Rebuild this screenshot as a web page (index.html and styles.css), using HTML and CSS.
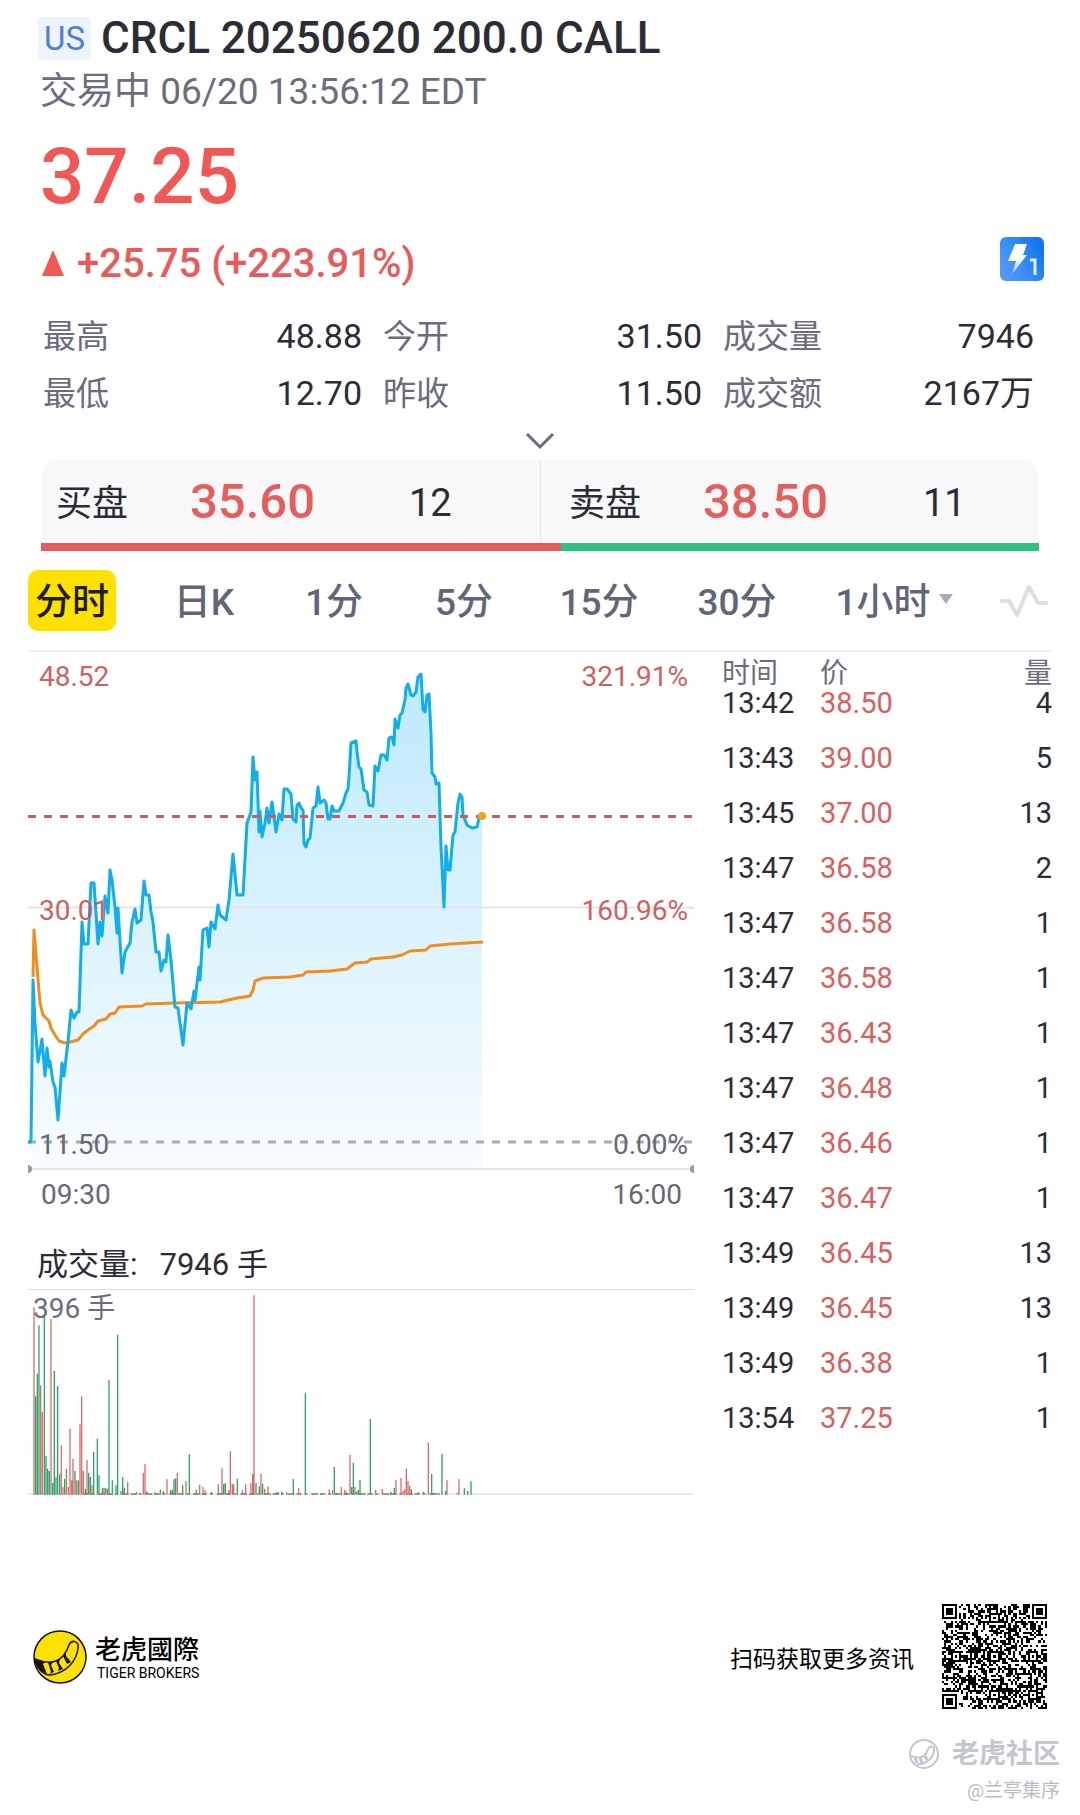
FILE: index.html
```html
<!DOCTYPE html>
<html lang="zh-CN">
<head>
<meta charset="utf-8">
<meta name="viewport" content="width=device-width, initial-scale=1">
<title>CRCL 20250620 200.0 CALL</title>
<link rel="stylesheet" href="styles.css">
</head>
<body>
<main class="page">
  <header class="quote">
    <h1 class="title"><span class="market">US</span>CRCL 20250620 200.0 CALL</h1>
    <p class="status">交易中 06/20 13:56:12 EDT</p>
    <p class="price">37.25</p>
    <div class="change">
      <svg class="up" viewBox="0 0 22 26" aria-hidden="true"><path d="M11 0L22 26H0Z" fill="#f15755"/></svg>
      <span>+25.75 (+223.91%)</span>
      <svg class="level" viewBox="0 0 44 44" role="img" aria-label="Level 1">
        <defs>
          <linearGradient id="lv" x1="0" y1="1" x2="1" y2="0.4"><stop offset="0" stop-color="#5f97f6"/><stop offset="0.5" stop-color="#3a8ff8"/><stop offset="1" stop-color="#1476ee"/></linearGradient>
          <linearGradient id="bolt" x1="0" y1="0" x2="0" y2="1"><stop offset="0.4" stop-color="#fff"/><stop offset="1" stop-color="#a9d2ff"/></linearGradient>
        </defs>
        <rect width="44" height="44" rx="6" fill="url(#lv)"/>
        <path d="M15 7H27L23 18H27L12 37L16 24H8Z" fill="url(#bolt)"/>
        <path d="M30 23H35V38" fill="none" stroke="#e4f1ff" stroke-width="3"/>
      </svg>
    </div>
  </header>

  <dl class="stats">
    <div><dt>最高</dt><dd>48.88</dd></div>
    <div><dt>今开</dt><dd>31.50</dd></div>
    <div><dt>成交量</dt><dd>7946</dd></div>
    <div><dt>最低</dt><dd>12.70</dd></div>
    <div><dt>昨收</dt><dd>11.50</dd></div>
    <div><dt>成交额</dt><dd>2167万</dd></div>
  </dl>
  <button class="expand" type="button" aria-label="展开">
    <svg viewBox="0 0 30 18"><path d="M2 2L15 15L28 2" fill="none" stroke="#6b6d7d" stroke-width="3"/></svg>
  </button>

  <section class="book">
    <div class="side bid"><span class="label">买盘</span><strong>35.60</strong><span class="lots">12</span></div>
    <div class="side ask"><span class="label">卖盘</span><strong>38.50</strong><span class="lots">11</span></div>
  </section>
  <div class="ratio"><i class="buy" style="width:52.1%"></i><i class="sell"></i></div>

  <nav class="tabs">
    <button type="button" class="active">分时</button>
    <button type="button">日K</button>
    <button type="button">1分</button>
    <button type="button">5分</button>
    <button type="button">15分</button>
    <button type="button">30分</button>
    <button type="button" class="more">1小时<svg viewBox="0 0 14 10" aria-hidden="true"><path d="M0 0H14L7 10Z" fill="#a8abba"/></svg></button>
    <button type="button" class="wave" aria-label="指标"><svg viewBox="0 0 48 34"><path d="M2 17H9L17 31L29 3L38 19H46" fill="none" stroke="#dddde2" stroke-width="4" stroke-linecap="round" stroke-linejoin="round"/></svg></button>
  </nav>

  <div class="board">
    <section class="charts">
      <svg class="chart" viewBox="28 652 666 562" role="img" aria-label="分时走势">
        <defs><linearGradient id="area" gradientUnits="userSpaceOnUse" x1="0" y1="674" x2="0" y2="1169"><stop offset="0" stop-color="#bde9fe"/><stop offset="0.5" stop-color="#dbf3fd"/><stop offset="1" stop-color="#f8fcff"/></linearGradient></defs>
        <path fill="url(#area)" d="M31 1169V1142L33 980 35 1023 38 1062 42 1039 45 1076 47 1048 49 1067 50 1061 53 1082 55 1087 58 1120 62 1063 64 1076 67 1050 68 1042 71 1010 74 1018 77 1012 79 1012 80 983 82 922 84 944 88 944 91 883 94 883 98 944 100 922 102 936 105 896 108 913 110 870 112 880 115 907 117 933 118 908 122 973 125 952 130 943 132 922 135 909 137 923 141 920 144 881 146 895 149 895 151 912 153 922 156 952 159 952 161 971 164 960 166 962 168 935 171 960 175 1007 178 1008 183 1045 187 1003 191 1009 194 991 195 1000 199 967 200 980 203 930 207 928 209 947 211 922 215 929 218 905 220 915 226 920 229 900 233 854 237 895 243 895 247 823 251 812 253 757 255 780 257 772 259 832 260 811 262 837 265 823 267 808 269 823 272 802 276 832 279 814 282 820 284 789 287 789 291 794 293 819 296 822 297 805 299 803 301 808 303 810 304 843 306 847 308 840 310 838 313 808 316 806 318 787 320 803 324 800 326 803 328 819 330 819 332 806 334 811 339 811 343 803 346 793 348 789 349 777 351 743 356 741 357 752 359 767 361 769 364 790 367 792 369 805 373 806 375 766 378 771 381 755 384 755 387 760 389 738 392 737 394 745 395 719 398 728 400 715 402 713 405 700 406 688 408 684 411 695 413 696 416 692 418 677 421 674 423 710 425 712 427 695 429 694 431 733 432 773 435 777 436 784 439 783 441 847 444 907 446 846 448 870 450 870 453 835 455 832 458 803 460 794 462 797 463 815 467 825 472 828 477 827 479 818 482 816V1169Z"/>
        <path d="M28 907.500H694M28 1169H694" stroke="#e2e6ea" stroke-width="2" fill="none"/>
        <path d="M28 1142H694" stroke="#a9acb4" stroke-width="3" stroke-dasharray="8 8"/>
        <path fill="none" stroke="#f28c1c" stroke-width="3" stroke-linejoin="round" d="M33 977L34 930 37 967 40 1003 43 1015 49 1021 51 1028 55 1035 59 1041 65 1043 70 1042 78 1040 83 1034 88 1030 94 1026 98 1021 106 1019 110 1014 115 1013 119 1007 142 1006 146 1004 175 1003 220 1002 237 998 250 996 253 990 255 981 263 978 290 977 303 975 306 972 330 971 347 969 355 963 367 962 371 959 393 957 402 955 410 951 426 950 430 946 450 944 483 942"/>
        <path fill="none" stroke="#11aeec" stroke-width="3" stroke-linejoin="round" d="M28 1142H31L33 980 35 1023 38 1062 42 1039 45 1076 47 1048 49 1067 50 1061 53 1082 55 1087 58 1120 62 1063 64 1076 67 1050 68 1042 71 1010 74 1018 77 1012 79 1012 80 983 82 922 84 944 88 944 91 883 94 883 98 944 100 922 102 936 105 896 108 913 110 870 112 880 115 907 117 933 118 908 122 973 125 952 130 943 132 922 135 909 137 923 141 920 144 881 146 895 149 895 151 912 153 922 156 952 159 952 161 971 164 960 166 962 168 935 171 960 175 1007 178 1008 183 1045 187 1003 191 1009 194 991 195 1000 199 967 200 980 203 930 207 928 209 947 211 922 215 929 218 905 220 915 226 920 229 900 233 854 237 895 243 895 247 823 251 812 253 757 255 780 257 772 259 832 260 811 262 837 265 823 267 808 269 823 272 802 276 832 279 814 282 820 284 789 287 789 291 794 293 819 296 822 297 805 299 803 301 808 303 810 304 843 306 847 308 840 310 838 313 808 316 806 318 787 320 803 324 800 326 803 328 819 330 819 332 806 334 811 339 811 343 803 346 793 348 789 349 777 351 743 356 741 357 752 359 767 361 769 364 790 367 792 369 805 373 806 375 766 378 771 381 755 384 755 387 760 389 738 392 737 394 745 395 719 398 728 400 715 402 713 405 700 406 688 408 684 411 695 413 696 416 692 418 677 421 674 423 710 425 712 427 695 429 694 431 733 432 773 435 777 436 784 439 783 441 847 444 907 446 846 448 870 450 870 453 835 455 832 458 803 460 794 462 797 463 815 467 825 472 828 477 827 479 818 482 816"/>
        <path d="M28 816.500H694" stroke="#d05a5e" stroke-width="3" stroke-dasharray="8 8"/>
        <circle cx="482" cy="816" r="4" fill="#eea41c"/>
        <path d="M28 1165a4 4 0 0 1 0 8ZM694 1165a4 4 0 0 0 0 8Z" fill="#999ba3"/>
        <g class="up-text"><text x="39" y="686">48.52</text><text x="39" y="920">30.01</text><text class="end" x="688" y="686">321.91%</text><text class="end" x="688" y="920">160.96%</text></g>
        <g class="flat-text"><text x="39" y="1154">11.50</text><text class="end" x="688" y="1154">0.00%</text><text x="41" y="1204">09:30</text><text class="end" x="682" y="1204">16:00</text></g>
      </svg>
      <h2 class="volume-title">成交量:<span>7946 手</span></h2>
      <div class="volume">
        <span class="peak">396 手</span>
        <svg viewBox="24 149 1998 615" role="img" aria-label="成交量">
          <path d="M24 761H2022" stroke="#e4e4e6" stroke-width="5"/>
          <g fill="none" stroke-width="4">
            <path stroke="#de6c6c" d="M42 763V200M62 763V435M67 763V515M93 763V236M124 763V615M129 763V740M139 763V685M145 763V740M150 763V565M155 763V720M159 763V655M170 763V720M180 763V552M185 763V468M190 763V692M201 763V658M216 763V735M247 763V742M257 763V742M323 763V725M350 763V755M370 763V697M375 763V672M441 763V717M472 763V698M498 763V722M539 763V733M549 763V740M555 763V750M595 763V732M606 763V684M626 763V750M631 763V633M637 763V732M641 763V732M667 763V750M677 763V732M693 763V728M698 763V700M702 763V165M723 763V700M734 763V745M744 763V738"/>
            <path stroke="#2fa56d" d="M47 763V468M52 763V400M57 763V255M73 763V225M78 763V646M83 763V685M88 763V692M98 763V728M103 763V391M108 763V710M113 763V437M119 763V702M134 763V715M165 763V692M175 763V720M196 763V745M206 763V697M211 763V710M221 763V635M232 763V595M237 763V705M252 763V742M262 763V745M267 763V420M277 763V720M288 763V735M293 763V283M303 763V752M308 763V710M313 763V742M380 763V753M405 763V756M421 763V748M430 763V752M452 763V750M457 763V748M462 763V717M467 763V714M488 763V735M508 763V641M529 763V748M575 763V754M611 763V732M616 763V728M652 763V715M708 763V728M718 763V738M728 763V730M770 763V755"/>
            <path stroke="#8f7a66" stroke-dasharray="16 9 8 12 20 6" d="M190 761H1260"/>
            <g transform="translate(750 122)">
              <path stroke="#de6c6c" d="M86 641V622M128 641V636M178 641V625M188 641V627M214 641V618M224 641V627M240 641V522M255 641V618M317 641V627M337 641V624M378 641V596M393 641V591M399 641V630M404 641V625M409 641V563M414 641V600M419 641V614M445 641V633M475 641V485M531 641V598M562 641V635M567 641V595"/>
              <path stroke="#2fa56d" d="M25 641V634M35 641V632M50 641V634M70 641V594M106 641V337M154 641V637M193 641V557M199 641V635M229 641V632M245 641V618M250 641V545M260 641V632M265 641V627M270 641V597M301 641V414M362 641V632M373 641V620M424 641V625M460 641V633M485 641V579M490 641V636M501 641V636M516 641V518M527 641V630M583 641V622M593 641V630M603 641V601"/>
            </g>
          </g>
        </svg>
      </div>
    </section>

    <table class="ticks">
      <thead><tr><th scope="col">时间</th><th scope="col">价</th><th scope="col">量</th></tr></thead>
      <tbody>
        <tr><td>13:42</td><td>38.50</td><td>4</td></tr>
        <tr><td>13:43</td><td>39.00</td><td>5</td></tr>
        <tr><td>13:45</td><td>37.00</td><td>13</td></tr>
        <tr><td>13:47</td><td>36.58</td><td>2</td></tr>
        <tr><td>13:47</td><td>36.58</td><td>1</td></tr>
        <tr><td>13:47</td><td>36.58</td><td>1</td></tr>
        <tr><td>13:47</td><td>36.43</td><td>1</td></tr>
        <tr><td>13:47</td><td>36.48</td><td>1</td></tr>
        <tr><td>13:47</td><td>36.46</td><td>1</td></tr>
        <tr><td>13:47</td><td>36.47</td><td>1</td></tr>
        <tr><td>13:49</td><td>36.45</td><td>13</td></tr>
        <tr><td>13:49</td><td>36.45</td><td>13</td></tr>
        <tr><td>13:49</td><td>36.38</td><td>1</td></tr>
        <tr><td>13:54</td><td>37.25</td><td>1</td></tr>
      </tbody>
    </table>
  </div>

  <footer class="footer">
    <svg class="logo" viewBox="0 0 54 54" aria-hidden="true">
      <circle cx="27" cy="27" r="26" fill="#ffe100" stroke="#15130a" stroke-width="1.500"/>
      <path d="M2 29C9 32 17 33 23 31C31 28 34 21 36 15C39 9 46 11 45 18C44 30 34 43 17 45C13 45 10 43 8 41C4 37 2 33 2 29Z" fill="#ffe100" stroke="#15130a" stroke-width="1.500"/>
      <path d="M2 29L12 32L10 34L14 44L8 41C4 37 2 33 2 29ZM15 32L20 32L18 35L21 42L16 44L18 42ZM23 31L27 29L26 33L30 39L25 41L26 38ZM30 26L33 22L33 26L38 32L34 34Z" fill="#15130a"/>
    </svg>
    <div class="brand"><strong>老虎國際</strong><span>TIGER BROKERS</span></div>
    <p class="scan">扫码获取更多资讯</p>
    <svg class="qr" viewBox="0 0 49 49" role="img" aria-label="二维码" shape-rendering="crispEdges"><path id="qr" fill="#000"/></svg>
  </footer>
  <div class="community">
    <p class="name"><svg viewBox="0 0 32 32" aria-hidden="true"><g fill="none" stroke="#c3c5cf" stroke-width="2"><circle cx="16" cy="16" r="14"/><path d="M3 18C12 22 18 18 20 11C22 7 27 8 26 13C25 20 18 27 9 26"/><path d="M7 20L9 25M12 20L14 25M17 18L19 22" stroke-width="3"/></g></svg>老虎社区</p>
    <p class="author">@兰亭集序</p>
  </div>
</main>
<script src="qr.js"></script>
</body>
</html>
```
FILE: qr.js
```js
// Fills the 49-module code: finder, alignment and timing patterns, then data modules.
(function () {
  var size = 49, seed = 20250620, d = '';
  var finders = [[3, 3], [45, 3], [3, 45]];
  var aligns = [[24, 6], [6, 24], [24, 24], [42, 24], [24, 42], [42, 42]];
  function ring(x, y, c) { return Math.max(Math.abs(x - c[0]), Math.abs(y - c[1])); }
  function dark(x, y) {
    var i, r;
    seed = (seed * 1103515245 + 12345) % 2147483648;
    for (i = 0; i < finders.length; i++) {
      r = ring(x, y, finders[i]);
      if (r <= 4) return r !== 2 && r !== 4;
    }
    for (i = 0; i < aligns.length; i++) {
      r = ring(x, y, aligns[i]);
      if (r <= 2) return r !== 1;
    }
    if (x === 6 || y === 6) return (x + y) % 2 === 0;
    return seed / 2147483648 < 0.52;
  }
  for (var y = 0; y < size; y++)
    for (var x = 0; x < size; x++)
      if (dark(x, y)) d += 'M' + x + ' ' + y + 'h1v1h-1z';
  document.getElementById('qr').setAttribute('d', d);
})();
```
FILE: styles.css
```css
* { box-sizing: border-box; }
body, h1, h2, p, dl, dd { margin: 0; }
body {
  background: #fff;
  color: #2b2c36;
  font-family: Roboto, "Noto Sans CJK SC", sans-serif;
}
button {
  padding: 0;
  border: 0;
  background: none;
  color: inherit;
  font: inherit;
}
svg { display: block; }

.quote { padding: 12px 36px 0 40px; }
.title {
  display: flex;
  align-items: center;
  gap: 10px;
  margin-left: -2px;
  font-size: 44px;
  font-weight: 500;
  line-height: 52px;
}
.market {
  padding: 0 6px;
  border-radius: 4px;
  background: #eef4fe;
  color: #4c7fd9;
  font-size: 33px;
  font-weight: 400;
  line-height: 43px;
}
.status { color: #6b6d7d; font-size: 37px; line-height: 56px; }
.price { color: #f15755; font-size: 78px; font-weight: 500; line-height: 114px; }
.change {
  display: flex;
  align-items: center;
  gap: 13px;
  height: 58px;
  color: #e95a59;
  font-size: 40px;
  font-weight: 500;
}
.up { width: 22px; height: 26px; margin-left: 2px; }
.level { width: 44px; height: 44px; margin: 0 0 8px auto; }

.stats {
  display: grid;
  grid-template-columns: 319fr 319fr 311fr;
  column-gap: 21px;
  padding: 16px 46px 0 43px;
  font-size: 34px;
  line-height: 57px;
}
.stats div { display: flex; justify-content: space-between; }
.stats dt { color: #6b6d7d; font-size: 33px; }
.expand { display: flex; align-items: center; justify-content: center; width: 100%; height: 38px; }
.expand svg { width: 30px; height: 18px; }

.book {
  display: grid;
  grid-template-columns: 1fr 1fr;
  margin: 0 41px;
  border-radius: 16px 16px 0 0;
  background: #f8f8f9;
}
.side {
  display: grid;
  grid-template-columns: 134fr 219fr 131fr;
  align-items: center;
  height: 83px;
  padding-left: 15px;
  font-size: 36px;
}
.side.ask { padding-left: 28px; border-left: 1px solid #e8e8ea; grid-template-columns: 134fr 220fr 116fr; }
.side .label { padding-bottom: 4px; }
.side strong { color: #e75d5d; font-size: 49px; font-weight: 500; }
.side .lots { padding-top: 2px; font-size: 38px; }
.ratio { display: flex; height: 8px; margin: 0 41px; }
.buy { background: #e75d5d; }
.sell { flex: 1; background: #2fc083; }

.tabs {
  display: grid;
  grid-template-columns: 110fr 132fr 128fr 132fr 138fr 138fr 176fr 66fr;
  align-items: center;
  margin: 19px 32px 0 28px;
  color: #62647a;
  font-size: 37px;
  font-weight: 500;
}
.tabs button { height: 61px; padding-bottom: 4px; }
.tabs .active {
  justify-self: start;
  padding: 0 7px 4px;
  border-radius: 10px;
  background: #ffe100;
  color: #1f1c0c;
}
.tabs .more { display: flex; align-items: center; justify-content: center; gap: 8px; }
.more svg { width: 14px; height: 10px; }
.tabs .wave { justify-self: end; padding: 0; }
.wave svg { width: 48px; height: 34px; }

.board {
  display: grid;
  grid-template-columns: 666fr 330fr;
  column-gap: 28px;
  align-items: start;
  margin: 19px 28px 0;
  border-top: 2px solid #f0f0f1;
}
.chart { width: 100%; height: auto; font-size: 28px; }
.up-text { fill: #d05f62; }
.flat-text { fill: #666875; }
.end { text-anchor: end; }
.volume-title {
  display: flex;
  gap: 22px;
  height: 76px;
  padding: 27px 0 0 9px;
  border-bottom: 1px solid #dcdde0;
  font-size: 31px;
  font-weight: 400;
  line-height: 48px;
}
.volume { position: relative; }
.volume svg { width: 100%; height: auto; }
.peak { position: absolute; top: 0; left: 5px; color: #6b6d7d; font-size: 28px; line-height: 38px; }

.ticks, .ticks thead, .ticks tbody { display: block; }
.ticks tbody { overflow: hidden; }
.ticks tr { display: grid; grid-template-columns: 98px 1fr auto; }
.ticks th, .ticks td { padding: 0; text-align: left; }
.ticks th { padding-top: 4px; color: #6b6d7d; font-size: 28px; font-weight: 400; line-height: 36px; }
.ticks td { font-size: 29px; line-height: 55px; }
.ticks td:nth-child(2) { color: #d9605f; }
.ticks tbody tr:first-child { margin-top: -16px; }

.footer {
  display: flex;
  align-items: center;
  margin-top: 109px;
  padding: 0 33px;
  color: #000;
}
.logo { width: 54px; height: 54px; }
.brand { display: flex; flex-direction: column; margin-left: 8px; padding-top: 2px; }
.brand strong { font-size: 26px; font-weight: 500; line-height: 30px; }
.brand span { padding-left: 2px; font-size: 14px; line-height: 16px; }
.scan { margin: 0 28px 0 auto; font-size: 23px; }
.qr { width: 105px; height: 105px; }
.community {
  display: flex;
  flex-direction: column;
  align-items: flex-end;
  padding: 25px 20px 4px;
  color: #c3c5cf;
}
.name { display: flex; align-items: center; gap: 12px; font-size: 27px; font-weight: 700; line-height: 40px; }
.name svg { width: 32px; height: 32px; }
.author { color: #b9bbc5; font-size: 19px; line-height: 34px; }
```
